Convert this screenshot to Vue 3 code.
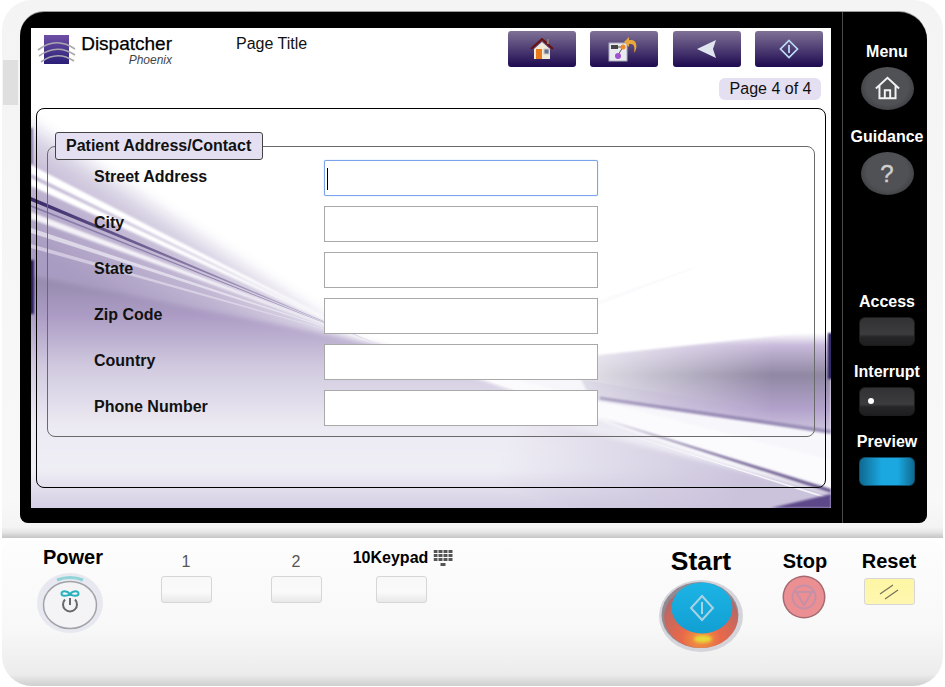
<script setup>
const fields = ['Street Address', 'City', 'State', 'Zip Code', 'Country', 'Phone Number']
</script>

<template>
  <div class="device">
    <div class="case">
      <div class="case-notch"></div>
      <div class="bezel">
        <div class="screen">
          <svg class="art" viewBox="0 0 800 480" preserveAspectRatio="none" aria-hidden="true">
            <defs>
              <linearGradient id="low" gradientUnits="userSpaceOnUse" x1="0" y1="240" x2="0" y2="480">
                <stop offset="0" stop-color="#8f86a6" />
                <stop offset=".2" stop-color="#ac9cc5" />
                <stop offset=".42" stop-color="#d2cbe0" />
                <stop offset=".65" stop-color="#ebe9f2" />
                <stop offset=".84" stop-color="#efeef5" />
                <stop offset="1" stop-color="#d3cee3" />
              </linearGradient>
              <linearGradient id="up" gradientUnits="userSpaceOnUse" x1="100" y1="151" x2="40" y2="241">
                <stop offset="0" stop-color="#fff" />
                <stop offset=".2" stop-color="#d8d2e4" />
                <stop offset=".5" stop-color="#c0b5d2" />
                <stop offset="1" stop-color="#a99cc2" />
              </linearGradient>
              <linearGradient id="darkRay" gradientUnits="userSpaceOnUse" x1="0" y1="0" x2="260" y2="0">
                <stop offset="0" stop-color="#3a2a6a" />
                <stop offset=".4" stop-color="#6a5c90" />
                <stop offset="1" stop-color="#b5abc8" />
              </linearGradient>
              <linearGradient id="band" gradientUnits="userSpaceOnUse" x1="0" y1="305" x2="0" y2="410">
                <stop offset="0" stop-color="#fff" />
                <stop offset=".12" stop-color="#c7b9da" />
                <stop offset=".4" stop-color="#9088a3" />
                <stop offset=".72" stop-color="#b2a2cb" />
                <stop offset="1" stop-color="#d6cde4" />
              </linearGradient>
              <linearGradient id="fade" gradientUnits="userSpaceOnUse" x1="540" y1="0" x2="740" y2="0">
                <stop offset="0" stop-color="#fff" stop-opacity=".2" />
                <stop offset="1" stop-color="#fff" />
              </linearGradient>
              <mask id="bandMask"><rect x="0" y="0" width="800" height="480" fill="url(#fade)" /></mask>
              <linearGradient id="floor" gradientUnits="userSpaceOnUse" x1="480" y1="400" x2="700" y2="490">
                <stop offset="0" stop-color="#cfc8de" stop-opacity="0" />
                <stop offset="1" stop-color="#cbc3dc" />
              </linearGradient>
              <filter id="b1"><feGaussianBlur stdDeviation="1" /></filter>
              <filter id="b2"><feGaussianBlur stdDeviation="2.500" /></filter>
              <filter id="b4"><feGaussianBlur stdDeviation="4" /></filter>
            </defs>
            <rect width="800" height="480" fill="#fff" />
            <polygon points="-20,72 349,317 -20,300" fill="url(#up)" filter="url(#b4)" />
            <polygon points="-20,244 349,317 820,472 820,500 -20,500" fill="url(#low)" filter="url(#b2)" />
            <polygon points="0,137 0,146 349,317" fill="#fff" filter="url(#b1)" />
            <polygon points="0,150 0,158 349,317" fill="#fff" filter="url(#b1)" />
            <polygon points="0,169 0,173 349,317" fill="url(#darkRay)" />
            <polygon points="0,177 0,179 349,317" fill="#8a7caa" />
            <polygon points="0,184 0,191 349,317" fill="#fff" opacity=".85" filter="url(#b1)" />
            <polygon points="0,200 0,205 349,317" fill="#efecf5" opacity=".7" />
            <polygon points="0,216 0,220 349,317" fill="#e8e4f0" opacity=".6" />
            <polygon points="349,317 569,355 800,392 800,466" fill="#f7f6fb" />
            <polygon points="349,317 800,432 800,472" fill="#fff" opacity=".5" filter="url(#b1)" />
            <polygon points="380,360 820,470 820,500 600,500 340,410" fill="url(#floor)" filter="url(#b2)" />
            <polygon points="569,390 800,465 800,461" fill="#6a5a8f" filter="url(#b1)" />
            <polygon points="569,398 800,472 800,470" fill="#fff" opacity=".8" />
            <polygon points="740,480 800,466 800,480" fill="#5d4a8a" filter="url(#b1)" />
            <polygon points="540,330 800,302 800,404 560,372" fill="url(#band)" mask="url(#bandMask)" filter="url(#b1)" />
            <polygon points="569,369 800,402 800,406 569,371" fill="#8174a3" opacity=".75" filter="url(#b1)" />
            <rect x="797" y="305" width="4" height="46" fill="#2b1a5e" filter="url(#b1)" />
            <rect x="-2" y="232" width="5" height="54" fill="#2a1a5c" filter="url(#b1)" />
            <rect x="-2" y="100" width="4" height="36" fill="#8a7caa" filter="url(#b1)" />
            <polygon points="560,275 660,240 662,241 565,278" fill="#fbfbfd" />
          </svg>

          <header class="top">
            <div class="logo">
              <svg class="logo-mark" viewBox="0 0 41 32" aria-hidden="true">
                <defs>
                  <linearGradient id="lg" x1="0" y1="0" x2="0" y2="1">
                    <stop offset="0" stop-color="#6f4fa6" />
                    <stop offset="1" stop-color="#2a1f78" />
                  </linearGradient>
                </defs>
                <rect x="7" y="1" width="25" height="29" fill="url(#lg)" />
                <g fill="none" stroke="#a9a9ad" stroke-width="1.6">
                  <path d="M1 16Q19 2 38 15" />
                  <path d="M2 22Q20 9 38 21" />
                  <path d="M4 28Q20 16 37 27" />
                </g>
              </svg>
              <div class="logo-text">
                <span class="logo-name">Dispatcher</span>
                <span class="logo-sub">Phoenix</span>
              </div>
            </div>
            <div class="page-title">Page Title</div>
            <nav class="tools">
              <button class="tool" type="button">
                <svg width="24" height="22" viewBox="0 0 24 22">
                  <path d="M4 11V21H20V11L12 4Z" fill="#f2ead8" />
                  <path d="M1 11L12 1 23 11" fill="none" stroke="#6d1010" stroke-width="2" />
                  <rect x="6" y="11" width="6" height="10" fill="#e87a1c" />
                  <rect x="14" y="11" width="5" height="5" fill="#68708a" stroke="#ccc" />
                  <rect x="17" y="1" width="2" height="5" fill="#8a7a70" />
                </svg>
              </button>
              <button class="tool" type="button">
                <svg width="32" height="26" viewBox="0 0 32 26">
                  <rect x="1" y="7" width="18" height="18" fill="#e8eaf0" stroke="#aab" />
                  <rect x="3" y="9" width="7" height="4" fill="#444" />
                  <path d="M10 11H15M15 11L10 19" stroke="#555" fill="none" />
                  <circle cx="15" cy="11" r="2.5" fill="#f08a20" />
                  <circle cx="10" cy="20" r="3" fill="#a050d0" />
                  <path d="M21 4H23C29 4 30 12 26 17 27 11 26 8 23 8H21V11L16 6 21 1Z" fill="#eba83a" />
                </svg>
              </button>
              <button class="tool tool-c" type="button">
                <svg width="22" height="20" viewBox="0 0 22 20">
                  <path d="M1 10L20 1 17 10 20 19Z" fill="#dfe4ee" />
                </svg>
              </button>
              <button class="tool tool-d" type="button">
                <svg width="20" height="20" viewBox="0 0 20 20">
                  <path d="M10 1.5L18.5 10 10 18.5 1.500 10Z" fill="none" stroke="#bcdcf6" stroke-width="1.700" />
                  <path d="M10 6V14" stroke="#bcdcf6" stroke-width="1.800" />
                </svg>
              </button>
            </nav>
          </header>

          <div class="pager-row"><span class="pager">Page 4 of 4</span></div>

          <main class="frame">
            <fieldset class="group">
              <legend class="legend">Patient Address/Contact</legend>
              <div class="rows">
                <div v-for="(f, i) in fields" :key="f" class="row">
                  <label class="label">{{ f }}</label>
                  <div class="field" :class="{ focused: i === 0 }">
                    <span v-if="i === 0" class="caret"></span>
                  </div>
                </div>
              </div>
            </fieldset>
          </main>
        </div>

        <aside class="side">
          <div class="side-label">Menu</div>
          <div class="oval">
            <svg width="27" height="25" viewBox="0 0 30 28">
              <path d="M2 14L15 2 28 14M6 11V25H24V11M12 25V16H18V25" fill="none" stroke="#f2f2f2" stroke-width="2.200" />
            </svg>
          </div>
          <div class="side-label second">Guidance</div>
          <div class="oval"><span class="q">?</span></div>
          <div class="side-label access">Access</div>
          <div class="pad"></div>
          <div class="side-label next">Interrupt</div>
          <div class="pad"><span class="led"></span></div>
          <div class="side-label next">Preview</div>
          <div class="pad blue"></div>
        </aside>
      </div>
    </div>

    <section class="panel">
      <div class="col">
        <div class="name power">Power</div>
        <svg class="power-btn" width="68" height="62" viewBox="0 0 68 62">
          <ellipse cx="33" cy="31" rx="33" ry="30" fill="#e8e8f0" />
          <ellipse cx="33" cy="33" rx="26.500" ry="23.500" fill="#f4f4f6" stroke="#a2a2a8" stroke-width="1.500" />
          <path d="M20 8Q33 3 46 8" fill="none" stroke="#8fd4d8" stroke-width="3" />
          <path d="M33 22C30 18.500 24.500 18.500 24.500 21.500 24.500 24.500 30 24.500 33 22 36 18.500 41.500 18.500 41.500 21.500 41.500 24.500 36 24.500 33 22" fill="none" stroke="#2ab2bc" stroke-width="2" />
          <path d="M33 26V33M28 27.500A7 7 0 1 0 38 27.500" fill="none" stroke="#66686c" stroke-width="2" />
        </svg>
      </div>
      <div class="col">
        <div class="name num">1</div>
        <div class="key"></div>
      </div>
      <div class="col">
        <div class="name num">2</div>
        <div class="key"></div>
      </div>
      <div class="col">
        <div class="name keypad">
          <span>10Keypad</span>
          <svg width="20" height="18" viewBox="0 0 20 18">
            <g fill="#555">
              <rect x="0" y="0" width="4" height="3" /><rect x="5" y="0" width="4" height="3" /><rect x="10" y="0" width="4" height="3" /><rect x="15" y="0" width="4" height="3" />
              <rect x="0" y="4" width="4" height="3" /><rect x="5" y="4" width="4" height="3" /><rect x="10" y="4" width="4" height="3" /><rect x="15" y="4" width="4" height="3" />
              <rect x="0" y="8" width="4" height="3" /><rect x="5" y="8" width="4" height="3" /><rect x="10" y="8" width="4" height="3" /><rect x="15" y="8" width="4" height="3" />
              <rect x="7" y="13" width="5" height="3" />
            </g>
          </svg>
        </div>
        <div class="key"></div>
      </div>
      <div></div>
      <div class="col">
        <div class="name start">Start</div>
        <svg class="start-btn" width="86" height="74" viewBox="0 0 86 74">
          <defs>
            <radialGradient id="rg" cx=".5" cy=".85" r=".75">
              <stop offset="0" stop-color="#f2a13a" />
              <stop offset=".35" stop-color="#e8684a" />
              <stop offset="1" stop-color="#b0686c" />
            </radialGradient>
            <linearGradient id="bg" x1="0" y1="0" x2="0" y2="1">
              <stop offset="0" stop-color="#1cb4e6" />
              <stop offset="1" stop-color="#129fd2" />
            </linearGradient>
            <filter id="sb"><feGaussianBlur stdDeviation="1.500" /></filter>
          </defs>
          <ellipse cx="43" cy="37" rx="42" ry="36" fill="#d4d4da" />
          <ellipse cx="42" cy="36" rx="38.500" ry="33" fill="#8f8a94" />
          <ellipse cx="43" cy="38" rx="37" ry="31" fill="url(#rg)" />
          <ellipse cx="44" cy="29" rx="30.500" ry="25.500" fill="url(#bg)" />
          <ellipse cx="45" cy="60" rx="9" ry="3.500" fill="#e6d93a" filter="url(#sb)" />
          <path d="M44 17L55 29 44 41 33 29Z" fill="none" stroke="#a9d3e2" stroke-width="2" />
          <path d="M44 23V35" stroke="#a9d3e2" stroke-width="2" />
        </svg>
      </div>
      <div class="col">
        <div class="name stop">Stop</div>
        <svg class="stop-btn" width="44" height="44" viewBox="0 0 44 44">
          <circle cx="22" cy="22" r="21.500" fill="#a36a72" />
          <circle cx="22" cy="22" r="20" fill="#ec8f92" />
          <circle cx="22" cy="22" r="11.500" fill="none" stroke="#c490a8" stroke-width="2" />
          <path d="M14 17H30L22 30Z" fill="none" stroke="#c490a8" stroke-width="2" />
        </svg>
      </div>
      <div class="col">
        <div class="name reset">Reset</div>
        <div class="key yellow">
          <svg width="20" height="16" viewBox="0 0 20 16">
            <path d="M1 10L14 1M6 15L19 6" stroke="#777058" stroke-width="1.200" />
          </svg>
        </div>
      </div>
    </section>
  </div>
</template>

<style>
html, body { margin: 0; background: #fff; }
</style>

<style scoped>
.device {
  width: 945px;
  height: 687px;
  overflow: hidden;
  font-family: "Liberation Sans", Arial, sans-serif;
  color: #000;
  background: #fff;
}
.case {
  position: relative;
  box-sizing: border-box;
  width: 941px;
  height: 538px;
  margin-left: 2px;
  padding: 12px 0 0 18px;
  border-radius: 30px 30px 0 0;
  background: linear-gradient(#f4f4f4 0, #f8f8f8 500px, #f4f4f4 527px, #e6e6e6 532px, #c4c4c4 538px);
}
.case-notch {
  position: absolute;
  left: 1px;
  top: 60px;
  width: 15px;
  height: 45px;
  background: #dfdfdf;
}
.bezel {
  display: flex;
  box-sizing: border-box;
  width: 907px;
  height: 511px;
  padding: 16px 0 15px 11px;
  border-radius: 24px 28px 8px 8px;
  background: #000;
  box-shadow: 0 -1px 0 #9a9a9a;
}
.screen {
  position: relative;
  width: 800px;
  height: 480px;
  flex: none;
  overflow: hidden;
  background: #fff;
}
.art {
  position: absolute;
  inset: 0;
  width: 100%;
  height: 100%;
}
.top {
  position: relative;
  display: flex;
  height: 39px;
  padding: 3px 8px 0 6px;
  box-sizing: border-box;
}
.logo {
  display: flex;
  width: 199px;
  flex: none;
  align-items: flex-start;
  height: 36px;
}
.logo-mark {
  width: 41px;
  height: 32px;
  margin: 3px 1px 0 0;
  flex: none;
}
.logo-text {
  display: flex;
  flex-direction: column;
  align-items: flex-end;
  width: 93px;
  margin-top: 2px;
}
.logo-name {
  font-size: 19px;
  line-height: 21px;
  color: #000;
  -webkit-text-stroke: .25px #000;
}
.logo-sub {
  font-size: 12px;
  line-height: 12px;
  font-style: italic;
  color: #444;
}
.page-title {
  flex: 1;
  margin-top: 4px;
  font-size: 16px;
  line-height: 18px;
  color: #111;
}
.tools { display: flex; }
.tool {
  display: flex;
  align-items: center;
  justify-content: center;
  width: 68px;
  height: 36px;
  margin-left: 14px;
  padding: 0;
  border: 0;
  border-radius: 3px;
  background: linear-gradient(#7f7196, #1d0a50);
}
.tool-c { margin-left: 15px; }
.pager-row {
  position: relative;
  display: flex;
  justify-content: flex-end;
  margin: 11px 10px 0 0;
}
.pager {
  box-sizing: border-box;
  width: 102px;
  height: 22px;
  padding-left: 1px;
  border-radius: 6px;
  background: #e4e0f2;
  font-size: 16px;
  line-height: 22px;
  text-align: center;
  color: #111;
}
.frame {
  position: relative;
  box-sizing: border-box;
  width: 790px;
  height: 380px;
  margin: 8px 0 0 5px;
  padding: 23px 10px 0;
  border: 1px solid #000;
  border-radius: 8px;
}
.group {
  box-sizing: border-box;
  height: 305px;
  margin: 0;
  padding: 0;
  min-width: 0;
  border: 1px solid #6a6a6a;
  border-radius: 8px;
}
.legend {
  box-sizing: border-box;
  width: 208px;
  height: 28px;
  margin: 0 0 -5px 7px;
  padding: 0 0 0 10px;
  border: 1px solid #444;
  border-radius: 3px;
  background: #e4e0f2;
  font-size: 16px;
  font-weight: 700;
  line-height: 26px;
  color: #111;
}
.rows {
  display: flex;
  flex-direction: column;
  gap: 10px;
  padding: 5px 0 0 46px;
}
.row {
  display: flex;
  height: 36px;
}
.label {
  width: 230px;
  flex: none;
  padding-top: 8px;
  font-size: 16px;
  font-weight: 700;
  line-height: 18px;
  color: #111;
}
.field {
  position: relative;
  box-sizing: border-box;
  width: 274px;
  height: 36px;
  border: 1px solid #a9a9a9;
  background: #fff;
}
.focused {
  border-color: #7ba4ea;
  border-radius: 2px;
  box-shadow: 0 0 1px #7ba4ea;
}
.caret {
  position: absolute;
  left: 2px;
  top: 7px;
  width: 1px;
  height: 22px;
  background: #000;
}
.side {
  display: flex;
  flex-direction: column;
  align-items: center;
  box-sizing: border-box;
  width: 85px;
  margin: -16px 0 -15px 11px;
  padding: 31px 0 0 4px;
  border-left: 1px solid #4a4a4a;
}
.side-label {
  height: 18px;
  font-size: 16px;
  font-weight: 700;
  line-height: 18px;
  color: #fff;
  white-space: nowrap;
}
.second { margin-top: 18px; }
.access { margin-top: 98px; }
.next { margin-top: 17px; }
.oval {
  display: flex;
  align-items: center;
  justify-content: center;
  width: 53px;
  height: 43px;
  margin-top: 6px;
  border-radius: 50%;
  background: radial-gradient(ellipse at 50% 45%, #4f5155 55%, #2c2d30 100%);
}
.q {
  font-size: 24px;
  line-height: 28px;
  color: #cfcfcf;
  -webkit-text-stroke: .4px #cfcfcf;
}
.pad {
  position: relative;
  box-sizing: border-box;
  width: 56px;
  height: 29px;
  margin-top: 6px;
  border: 1px solid #1c1c1c;
  border-radius: 6px;
  background: linear-gradient(#323234, #3c3c3e 60%, #262628 70%, #1e1e20);
}
.blue {
  border-color: #0d4f6c;
  background: linear-gradient(90deg, #0f6a92, #1ba8e0 40%, #1ba8e0 70%, #0f6a92);
}
.led {
  position: absolute;
  left: 8px;
  top: 10px;
  width: 6px;
  height: 6px;
  border-radius: 50%;
  background: #fff;
}
.panel {
  display: grid;
  grid-template-columns: 142px 84px 136px 75px 201px 122px 86px 82px;
  box-sizing: border-box;
  width: 941px;
  height: 145px;
  margin: 3px 0 0 2px;
  border-radius: 12px 12px 30px 30px;
  background: linear-gradient(#fdfdfd, #f8f8f8 60%, #ececec 92%, #cfcfcf);
}
.col {
  display: flex;
  flex-direction: column;
  align-items: center;
  min-width: 0;
}
.name {
  white-space: nowrap;
  font-weight: 700;
}
.power {
  margin-top: 5px;
  height: 22px;
  font-size: 20px;
  line-height: 22px;
}
.power-btn { margin-top: 4px; margin-left: -4px; }
.num {
  margin-top: 12px;
  height: 18px;
  font-size: 16px;
  font-weight: 400;
  line-height: 18px;
  color: #555;
}
.key {
  box-sizing: border-box;
  display: flex;
  align-items: center;
  justify-content: center;
  width: 51px;
  height: 27px;
  margin-top: 5px;
  border: 1px solid #d6d6d6;
  border-radius: 3px;
  background: linear-gradient(#f8f8f8, #fafafa 60%, #e8e8e8);
}
.keypad {
  display: flex;
  align-items: flex-start;
  gap: 5px;
  margin-top: 8px;
  height: 22px;
  font-size: 16px;
  line-height: 18px;
  transform: translateX(1.500px);
}
.keypad svg { margin-top: 1px; }
.start {
  margin-top: 3px;
  height: 34px;
  font-size: 26.500px;
  line-height: 34px;
}
.start-btn { margin-top: 1px; }
.stop {
  margin-top: 8px;
  height: 24px;
  font-size: 20px;
  line-height: 24px;
}
.stop-btn { margin: 2px 0 0 -3px; }
.reset {
  margin-top: 8px;
  height: 24px;
  font-size: 20px;
  line-height: 24px;
}
.yellow {
  margin-top: 5px;
  background: linear-gradient(#fdf6a4, #fff7b0);
}
</style>
